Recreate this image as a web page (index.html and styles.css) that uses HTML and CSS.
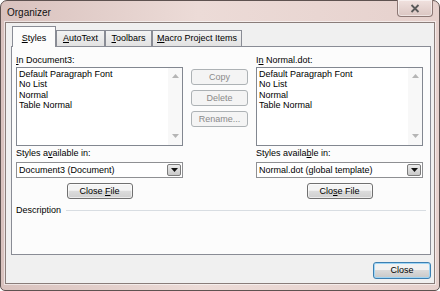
FILE: index.html
```html
<!DOCTYPE HTML>
<html>
<head>
<meta charset="utf-8">
<title>Organizer</title>
<link rel="stylesheet" href="styles.css">
</head>
<body>
<div class="window">
	<div class="titlebar">
		<span class="title">Organizer</span>
		<span class="closex">
			<svg width="10" height="9" viewBox="0 0 10 9"><path d="M1.5 1 L8.5 8 M8.5 1 L1.5 8" stroke="#5a5a5a" stroke-width="1.8" fill="none"/></svg>
		</span>
	</div>
	<div class="client">
		<div class="tabs">
			<div class="tab selected tab-styles"><u>S</u>tyles</div>
			<div class="tab tab-autotext"><u>A</u>utoText</div>
			<div class="tab tab-toolbars"><u>T</u>oolbars</div>
			<div class="tab tab-macro"><u>M</u>acro Project Items</div>
		</div>
		<div class="panel">
			<div class="columns">
				<div class="col">
					<div class="lbl"><u>I</u>n Document3:</div>
					<div class="listbox">
						<div class="items">
							<div>Default Paragraph Font</div>
							<div>No List</div>
							<div>Normal</div>
							<div>Table Normal</div>
						</div>
						<div class="scroll">
							<svg width="7" height="4" viewBox="0 0 7 4"><path d="M0 4 L3.5 0 L7 4 Z" fill="#b5b5b5"/></svg>
							<svg width="7" height="4" viewBox="0 0 7 4"><path d="M0 0 L3.5 4 L7 0 Z" fill="#b5b5b5"/></svg>
						</div>
					</div>
					<div class="lbl lbl-avail">Styles a<u>v</u>ailable in:</div>
					<div class="combo">
						<span class="combo-text">Document3 (Document)</span>
						<span class="drop"><svg width="7" height="4" viewBox="0 0 7 4"><path d="M0 0 L3.5 4 L7 0 Z" fill="#111"/></svg></span>
					</div>
					<button class="btn closefile">Close <u>F</u>ile</button>
				</div>
				<div class="middle">
					<button class="btn disabled">Copy</button>
					<button class="btn disabled">Delete</button>
					<button class="btn disabled">Rename...</button>
				</div>
				<div class="col">
					<div class="lbl">I<u>n</u> Normal.dot:</div>
					<div class="listbox">
						<div class="items">
							<div>Default Paragraph Font</div>
							<div>No List</div>
							<div>Normal</div>
							<div>Table Normal</div>
						</div>
						<div class="scroll">
							<svg width="7" height="4" viewBox="0 0 7 4"><path d="M0 4 L3.5 0 L7 4 Z" fill="#b5b5b5"/></svg>
							<svg width="7" height="4" viewBox="0 0 7 4"><path d="M0 0 L3.5 4 L7 0 Z" fill="#b5b5b5"/></svg>
						</div>
					</div>
					<div class="lbl lbl-avail">Styles availa<u>b</u>le in:</div>
					<div class="combo">
						<span class="combo-text">Normal.dot (global template)</span>
						<span class="drop"><svg width="7" height="4" viewBox="0 0 7 4"><path d="M0 0 L3.5 4 L7 0 Z" fill="#111"/></svg></span>
					</div>
					<button class="btn closefile">Clo<u>s</u>e File</button>
				</div>
			</div>
			<div class="description">Description</div>
		</div>
		<div class="footer">
			<button class="btn default">Close</button>
		</div>
	</div>
</div>
</body>
</html>
```

FILE: styles.css
```css
* {
	box-sizing: border-box;
}

body {
	margin: 0;
	background: #fff;
	font-family: "Liberation Sans", Arial, sans-serif;
	font-size: 9px;
	color: #000;
}

u {
	text-decoration: underline;
	text-underline-offset: 1px;
}

.window {
	width: 440px;
	height: 291px;
	border: 1px solid #5e5250;
	border-radius: 7px 7px 5px 5px;
	background: linear-gradient(to right, #d9c2be, #ecdbd7 45%, #e6d1cd);
	display: flex;
	flex-direction: column;
	padding: 0 4px 6px 4px;
}

.titlebar {
	height: 21px;
	display: flex;
	justify-content: space-between;
	align-items: flex-start;
}

.title {
	font-size: 10px;
	line-height: 12px;
	padding: 6px 0 0 2px;
	color: #111;
}

.closex {
	width: 36px;
	height: 17px;
	margin: -1px 2px 0 0;
	border: 1px solid #8d7875;
	border-top: none;
	border-radius: 0 0 4px 4px;
	background: linear-gradient(#f1e2df, #dbc6c2);
	box-shadow: inset 0 0 0 1px rgba(255,255,255,.5);
	display: flex;
	align-items: center;
	justify-content: center;
}

.client {
	flex: 1;
	border: 1px solid #8a7d7a;
	box-shadow: 0 0 0 1px rgba(255,255,255,.55);
	background: #f0f0f0;
	padding: 0 3px 0 5px;
	display: flex;
	flex-direction: column;
}

/* tabs */
.tabs {
	height: 23px;
	display: flex;
	align-items: flex-end;
	padding-left: 1px;
}

.tab {
	height: 16px;
	border: 1px solid #898c95;
	border-bottom: none;
	background: linear-gradient(#f3f3f3, #e2e2e2);
	text-align: center;
	line-height: 14px;
}

.tab.selected {
	height: 21px;
	margin-bottom: -1px;
	position: relative;
	z-index: 1;
	background: #fcfcfc;
	padding-top: 5px;
	line-height: 13px;
}

.tab-styles { width: 44px; }
.tab-autotext { width: 49px; }
.tab-toolbars { width: 47px; }
.tab-macro { width: 90px; }

.panel {
	height: 209px;
	border: 1px solid #898c95;
	background: #fcfcfc;
	padding: 8px 3px 0 4px;
}

.columns {
	display: flex;
	align-items: flex-start;
}

.col {
	width: 167px;
	display: flex;
	flex-direction: column;
}

.lbl {
	line-height: 11px;
	height: 11px;
	margin-bottom: 1px;
}

.lbl-avail {
	margin-top: 2px;
	margin-bottom: 3px;
}

.listbox {
	height: 79px;
	border: 1px solid #828790;
	background: #fff;
	display: flex;
}

.items {
	flex: 1;
	padding: 1px 2px;
	line-height: 10.4px;
}

.scroll {
	width: 14px;
	background: #f8f8f8;
	display: flex;
	flex-direction: column;
	justify-content: space-between;
	align-items: center;
	padding: 6px 0 7px;
}

.combo {
	height: 16px;
	border: 1px solid #8f9093;
	background: #fff;
	display: flex;
	align-items: center;
	padding: 1px;
}

.combo-text {
	flex: 1;
	padding-left: 1px;
}

.drop {
	width: 14px;
	height: 12px;
	border: 1px solid #7c7c7c;
	border-radius: 2px;
	background: linear-gradient(#ececec, #c9c9c9);
	display: flex;
	align-items: center;
	justify-content: center;
}

/* buttons */
.btn {
	font-family: "Liberation Sans", Arial, sans-serif;
	font-size: 9px;
	color: #000;
	height: 16px;
	padding: 0;
	border: 1px solid #707070;
	border-radius: 3px;
	background: linear-gradient(#f4f4f4 45%, #dcdcdc 50%, #cfcfcf);
	box-shadow: inset 0 0 0 1px rgba(255,255,255,.6);
	line-height: 13px;
}

.closefile {
	width: 66px;
	margin-top: 5px;
	align-self: center;
}

.middle {
	width: 57px;
	margin: 14px 8px 0 8px;
	display: flex;
	flex-direction: column;
	gap: 5px;
}

.btn.disabled {
	width: 57px;
	border-color: #adb2b5;
	background: #f4f4f4;
	color: #8a8a8a;
	box-shadow: none;
}

.description {
	margin-top: 6px;
	line-height: 11px;
	display: flex;
	align-items: center;
}

.description::after {
	content: "";
	flex: 1;
	height: 1px;
	background: #d8dde2;
	margin: 0 1px 0 5px;
}

.footer {
	display: flex;
	justify-content: flex-end;
	padding-top: 7px;
}

.btn.default {
	width: 58px;
	height: 17px;
	border-color: #3c7fb1;
	box-shadow: inset 0 0 0 1px #9fd5f5;
	background: linear-gradient(#f2f2f2 45%, #dadada 50%, #c8c8c8);
}
```
